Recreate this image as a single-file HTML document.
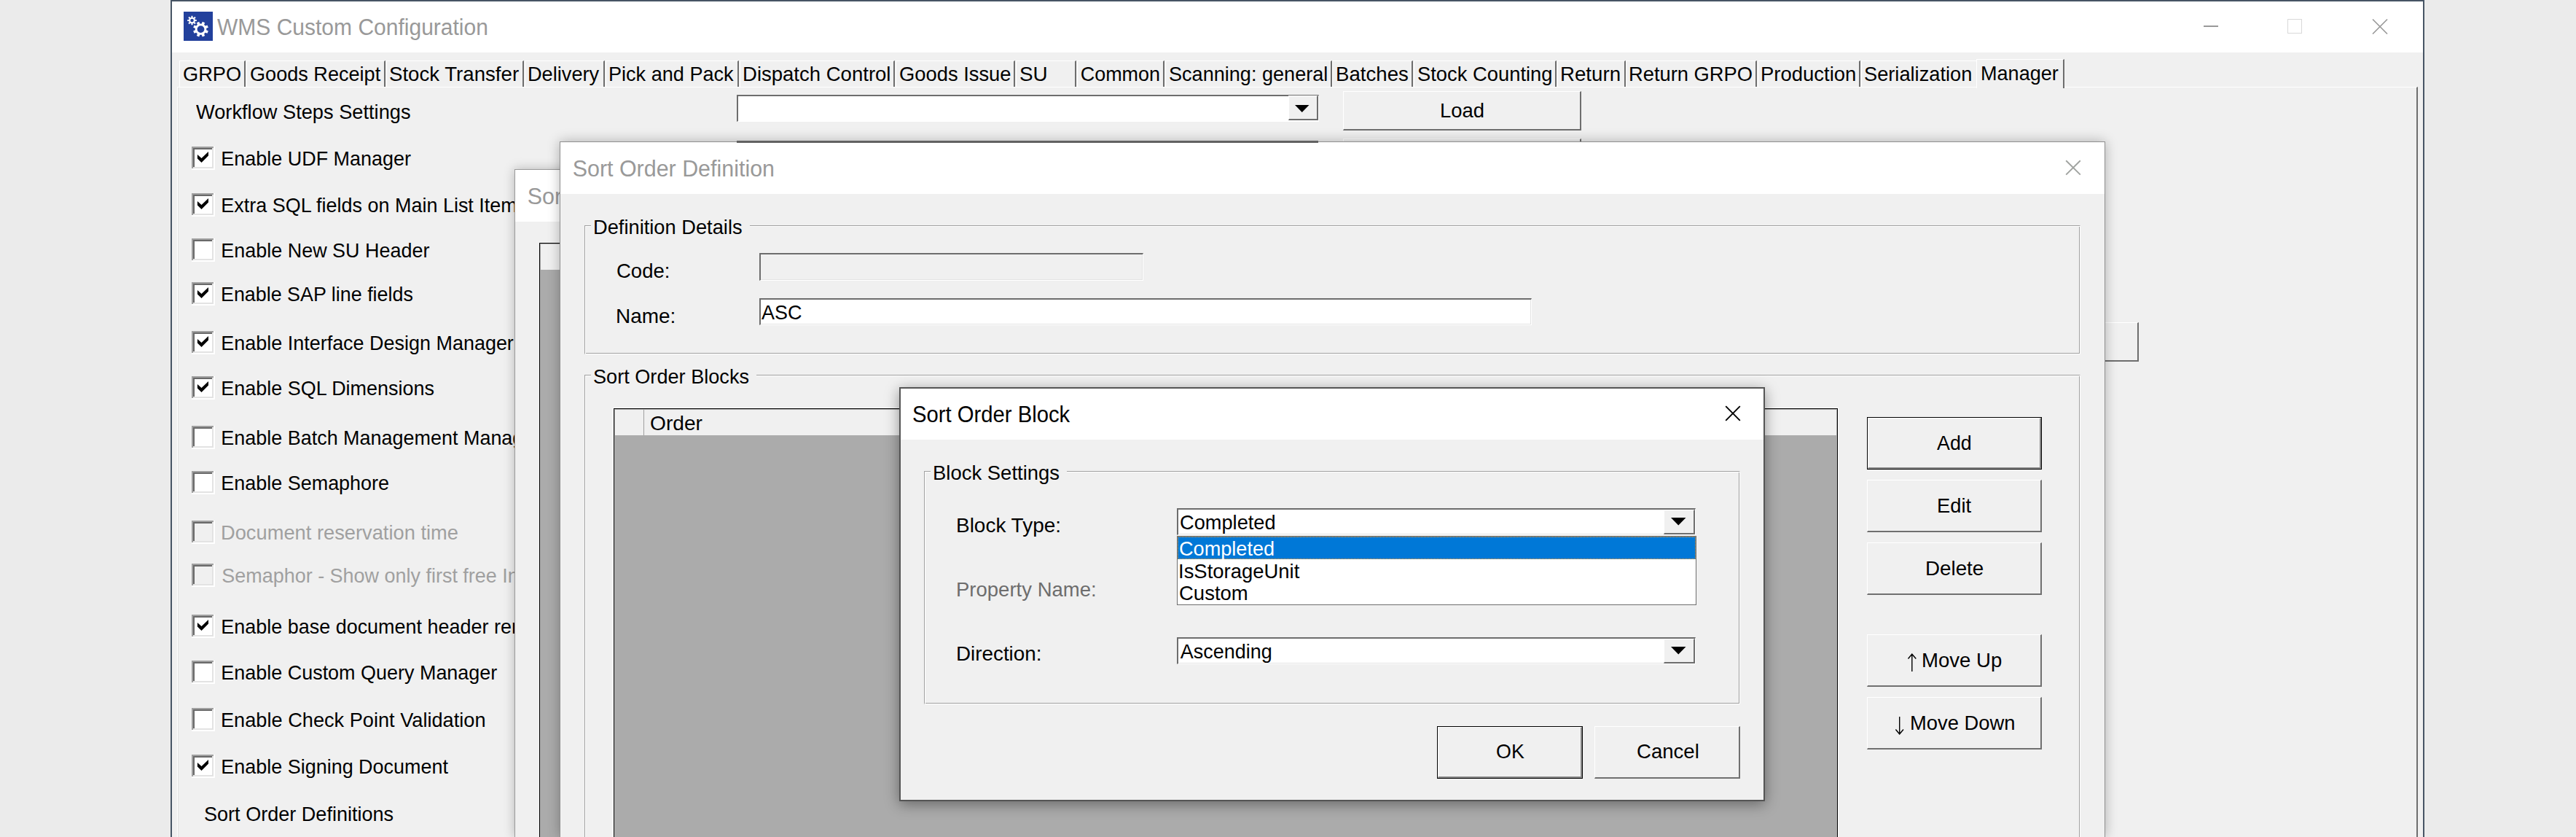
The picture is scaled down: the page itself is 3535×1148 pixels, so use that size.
<!DOCTYPE html>
<html><head><meta charset="utf-8"><style>
html,body{margin:0;padding:0;}
body{width:3535px;height:1148px;overflow:hidden;position:relative;background:#ebebeb;font-family:"Liberation Sans",sans-serif;}
div{position:absolute;}
.t{white-space:nowrap;transform-origin:0 0;}
</style></head><body>
<div class="" style="left:234px;top:0px;width:3093px;height:1148px;background:#f0f0f0;border:2px solid #475565;border-bottom:none;box-sizing:border-box"></div>
<div class="" style="left:236px;top:2px;width:3089px;height:70px;background:#fff"></div>
<svg style="position:absolute;left:252px;top:16px" width="40" height="40" viewBox="0 0 40 40"><rect width="40" height="40" fill="#22409c"/><path fill="#fff" fill-rule="evenodd" d="M24.73 16.40 L25.80 13.75 L29.19 15.15 L28.08 17.79 L29.81 19.52 L32.45 18.41 L33.85 21.80 L31.20 22.87 L31.20 25.33 L33.85 26.40 L32.45 29.79 L29.81 28.68 L28.08 30.41 L29.19 33.05 L25.80 34.45 L24.73 31.80 L22.27 31.80 L21.20 34.45 L17.81 33.05 L18.92 30.41 L17.19 28.68 L14.55 29.79 L13.15 26.40 L15.80 25.33 L15.80 22.87 L13.15 21.80 L14.55 18.41 L17.19 19.52 L18.92 17.79 L17.81 15.15 L21.20 13.75 L22.27 16.40 Z M28.40 24.10 A4.9 4.9 0 1 0 18.60 24.10 A4.9 4.9 0 1 0 28.40 24.10 Z"/><path fill="#fff" fill-rule="evenodd" d="M10.51 7.71 L10.44 5.69 L12.56 5.69 L12.49 7.71 L13.84 8.27 L15.21 6.79 L16.71 8.29 L15.23 9.66 L15.79 11.01 L17.81 10.94 L17.81 13.06 L15.79 12.99 L15.23 14.34 L16.71 15.71 L15.21 17.21 L13.84 15.73 L12.49 16.29 L12.56 18.31 L10.44 18.31 L10.51 16.29 L9.16 15.73 L7.79 17.21 L6.29 15.71 L7.77 14.34 L7.21 12.99 L5.19 13.06 L5.19 10.94 L7.21 11.01 L7.77 9.66 L6.29 8.29 L7.79 6.79 L9.16 8.27 Z M13.80 12.00 A2.3 2.3 0 1 0 9.20 12.00 A2.3 2.3 0 1 0 13.80 12.00 Z"/></svg>
<div class="t" style="left:297.50px;top:22.13px;font-size:30.43px;line-height:30.43px;color:#999;transform:scaleX(0.9864);">WMS Custom Configuration</div>
<div class="" style="left:3024px;top:35px;width:20px;height:2px;background:#999"></div>
<div class="" style="left:3139px;top:26px;width:20px;height:20px;border:1.5px solid #d9d9d9;box-sizing:border-box"></div>
<svg style="position:absolute;left:3255px;top:26px" width="22" height="21"><path d="M1 0.5 L21 20.5 M21 0.5 L1 20.5" stroke="#999" stroke-width="1.6"/></svg>
<div class="" style="left:246px;top:83px;width:91px;height:36px;border-left:1px solid #fff;border-top:1px solid #fff;border-right:2px solid #6e6e6e;box-sizing:border-box"></div>
<div class="t" style="left:250.59px;top:88.89px;font-size:26.96px;line-height:26.96px;color:#000;transform:scaleX(1.0094);">GRPO</div>
<div class="" style="left:338px;top:83px;width:191px;height:36px;border-left:1px solid #fff;border-top:1px solid #fff;border-right:2px solid #6e6e6e;box-sizing:border-box"></div>
<div class="t" style="left:342.69px;top:88.89px;font-size:26.96px;line-height:26.96px;color:#000;transform:scaleX(1.0051);">Goods Receipt</div>
<div class="" style="left:530px;top:83px;width:189px;height:36px;border-left:1px solid #fff;border-top:1px solid #fff;border-right:2px solid #6e6e6e;box-sizing:border-box"></div>
<div class="t" style="left:534.38px;top:88.89px;font-size:26.96px;line-height:26.96px;color:#000;transform:scaleX(1.0250);">Stock Transfer</div>
<div class="" style="left:720px;top:83px;width:110px;height:36px;border-left:1px solid #fff;border-top:1px solid #fff;border-right:2px solid #6e6e6e;box-sizing:border-box"></div>
<div class="t" style="left:723.68px;top:88.89px;font-size:26.96px;line-height:26.96px;color:#000;transform:scaleX(1.0081);">Delivery</div>
<div class="" style="left:831px;top:83px;width:183px;height:36px;border-left:1px solid #fff;border-top:1px solid #fff;border-right:2px solid #6e6e6e;box-sizing:border-box"></div>
<div class="t" style="left:835.49px;top:88.89px;font-size:26.96px;line-height:26.96px;color:#000;transform:scaleX(1.0046);">Pick and Pack</div>
<div class="" style="left:1015px;top:83px;width:213px;height:36px;border-left:1px solid #fff;border-top:1px solid #fff;border-right:2px solid #6e6e6e;box-sizing:border-box"></div>
<div class="t" style="left:1018.76px;top:88.89px;font-size:26.96px;line-height:26.96px;color:#000;transform:scaleX(1.0212);">Dispatch Control</div>
<div class="" style="left:1229px;top:83px;width:164px;height:36px;border-left:1px solid #fff;border-top:1px solid #fff;border-right:2px solid #6e6e6e;box-sizing:border-box"></div>
<div class="t" style="left:1233.59px;top:88.89px;font-size:26.96px;line-height:26.96px;color:#000;transform:scaleX(1.0144);">Goods Issue</div>
<div class="" style="left:1394px;top:83px;width:83px;height:36px;border-left:1px solid #fff;border-top:1px solid #fff;border-right:2px solid #6e6e6e;box-sizing:border-box"></div>
<div class="t" style="left:1398.77px;top:88.89px;font-size:26.96px;line-height:26.96px;color:#000;transform:scaleX(1.0324);">SU</div>
<div class="" style="left:1478px;top:83px;width:120px;height:36px;border-left:1px solid #fff;border-top:1px solid #fff;border-right:2px solid #6e6e6e;box-sizing:border-box"></div>
<div class="t" style="left:1482.70px;top:88.89px;font-size:26.96px;line-height:26.96px;color:#000;">Common</div>
<div class="" style="left:1599px;top:83px;width:229px;height:36px;border-left:1px solid #fff;border-top:1px solid #fff;border-right:2px solid #6e6e6e;box-sizing:border-box"></div>
<div class="t" style="left:1603.80px;top:88.89px;font-size:26.96px;line-height:26.96px;color:#000;transform:scaleX(1.0048);">Scanning: general</div>
<div class="" style="left:1828px;top:83px;width:111px;height:36px;border-left:1px solid #fff;border-top:1px solid #fff;border-right:2px solid #6e6e6e;box-sizing:border-box"></div>
<div class="t" style="left:1832.65px;top:88.89px;font-size:26.96px;line-height:26.96px;color:#000;transform:scaleX(1.0257);">Batches</div>
<div class="" style="left:1940px;top:83px;width:196px;height:36px;border-left:1px solid #fff;border-top:1px solid #fff;border-right:2px solid #6e6e6e;box-sizing:border-box"></div>
<div class="t" style="left:1944.79px;top:88.89px;font-size:26.96px;line-height:26.96px;color:#000;transform:scaleX(1.0149);">Stock Counting</div>
<div class="" style="left:2137px;top:83px;width:94px;height:36px;border-left:1px solid #fff;border-top:1px solid #fff;border-right:2px solid #6e6e6e;box-sizing:border-box"></div>
<div class="t" style="left:2141.05px;top:88.89px;font-size:26.96px;line-height:26.96px;color:#000;transform:scaleX(1.0261);">Return</div>
<div class="" style="left:2231px;top:83px;width:180px;height:36px;border-left:1px solid #fff;border-top:1px solid #fff;border-right:2px solid #6e6e6e;box-sizing:border-box"></div>
<div class="t" style="left:2234.97px;top:88.89px;font-size:26.96px;line-height:26.96px;color:#000;transform:scaleX(1.0139);">Return GRPO</div>
<div class="" style="left:2412px;top:83px;width:141px;height:36px;border-left:1px solid #fff;border-top:1px solid #fff;border-right:2px solid #6e6e6e;box-sizing:border-box"></div>
<div class="t" style="left:2415.76px;top:88.89px;font-size:26.96px;line-height:26.96px;color:#000;transform:scaleX(1.0191);">Production</div>
<div class="" style="left:2554px;top:83px;width:159px;height:36px;border-left:1px solid #fff;border-top:1px solid #fff;box-sizing:border-box"></div>
<div class="t" style="left:2558.49px;top:88.89px;font-size:26.96px;line-height:26.96px;color:#000;transform:scaleX(1.0100);">Serialization</div>
<div class="" style="left:243px;top:119px;width:3075px;height:1029px;box-shadow:inset 1px 0 0 #fff, inset 2px 0 0 #e3e3e3;border-top:1px solid #fff;border-top:1px solid #fff;border-right:2px solid #6e6e6e;box-sizing:border-box"></div>
<div class="" style="left:2712px;top:81px;width:121px;height:40px;background:#f0f0f0;border-left:1px solid #fff;border-top:1px solid #fff;border-right:2px solid #6e6e6e;box-sizing:border-box"></div>
<div class="t" style="left:2717.69px;top:87.69px;font-size:26.96px;line-height:26.96px;color:#000;transform:scaleX(1.0044);">Manager</div>
<div class="t" style="left:268.70px;top:140.89px;font-size:26.96px;line-height:26.96px;color:#000;transform:scaleX(1.0100);">Workflow Steps Settings</div>
<svg style="position:absolute;left:263px;top:201px" width="32" height="32"><rect x="0" y="0" width="32" height="32" fill="#fff"/><rect x="0" y="0" width="30" height="30" fill="#a0a0a0"/><rect x="2" y="2" width="28" height="28" fill="#e3e3e3"/><rect x="2" y="2" width="26" height="26" fill="#696969"/><rect x="4" y="4" width="24" height="24" fill="#fff"/><path d="M7.9 10.9 L7.9 16.6 L13.5 22 L23 12.5 L23 6.9 L13.5 16 Z" fill="#000"/></svg>
<div class="t" style="left:303.30px;top:204.59px;font-size:26.96px;line-height:26.96px;color:#000;">Enable UDF Manager</div>
<svg style="position:absolute;left:263px;top:265px" width="32" height="32"><rect x="0" y="0" width="32" height="32" fill="#fff"/><rect x="0" y="0" width="30" height="30" fill="#a0a0a0"/><rect x="2" y="2" width="28" height="28" fill="#e3e3e3"/><rect x="2" y="2" width="26" height="26" fill="#696969"/><rect x="4" y="4" width="24" height="24" fill="#fff"/><path d="M7.9 10.9 L7.9 16.6 L13.5 22 L23 12.5 L23 6.9 L13.5 16 Z" fill="#000"/></svg>
<div class="t" style="left:303.30px;top:268.59px;font-size:26.96px;line-height:26.96px;color:#000;">Extra SQL fields on Main List Item</div>
<svg style="position:absolute;left:263px;top:327px" width="32" height="32"><rect x="0" y="0" width="32" height="32" fill="#fff"/><rect x="0" y="0" width="30" height="30" fill="#a0a0a0"/><rect x="2" y="2" width="28" height="28" fill="#e3e3e3"/><rect x="2" y="2" width="26" height="26" fill="#696969"/><rect x="4" y="4" width="24" height="24" fill="#fff"/></svg>
<div class="t" style="left:303.30px;top:330.59px;font-size:26.96px;line-height:26.96px;color:#000;">Enable New SU Header</div>
<svg style="position:absolute;left:263px;top:387px" width="32" height="32"><rect x="0" y="0" width="32" height="32" fill="#fff"/><rect x="0" y="0" width="30" height="30" fill="#a0a0a0"/><rect x="2" y="2" width="28" height="28" fill="#e3e3e3"/><rect x="2" y="2" width="26" height="26" fill="#696969"/><rect x="4" y="4" width="24" height="24" fill="#fff"/><path d="M7.9 10.9 L7.9 16.6 L13.5 22 L23 12.5 L23 6.9 L13.5 16 Z" fill="#000"/></svg>
<div class="t" style="left:303.31px;top:390.59px;font-size:26.96px;line-height:26.96px;color:#000;transform:scaleX(0.9967);">Enable SAP line fields</div>
<svg style="position:absolute;left:263px;top:454px" width="32" height="32"><rect x="0" y="0" width="32" height="32" fill="#fff"/><rect x="0" y="0" width="30" height="30" fill="#a0a0a0"/><rect x="2" y="2" width="28" height="28" fill="#e3e3e3"/><rect x="2" y="2" width="26" height="26" fill="#696969"/><rect x="4" y="4" width="24" height="24" fill="#fff"/><path d="M7.9 10.9 L7.9 16.6 L13.5 22 L23 12.5 L23 6.9 L13.5 16 Z" fill="#000"/></svg>
<div class="t" style="left:303.30px;top:457.59px;font-size:26.96px;line-height:26.96px;color:#000;">Enable Interface Design Manager</div>
<svg style="position:absolute;left:263px;top:516px" width="32" height="32"><rect x="0" y="0" width="32" height="32" fill="#fff"/><rect x="0" y="0" width="30" height="30" fill="#a0a0a0"/><rect x="2" y="2" width="28" height="28" fill="#e3e3e3"/><rect x="2" y="2" width="26" height="26" fill="#696969"/><rect x="4" y="4" width="24" height="24" fill="#fff"/><path d="M7.9 10.9 L7.9 16.6 L13.5 22 L23 12.5 L23 6.9 L13.5 16 Z" fill="#000"/></svg>
<div class="t" style="left:303.30px;top:519.59px;font-size:26.96px;line-height:26.96px;color:#000;">Enable SQL Dimensions</div>
<svg style="position:absolute;left:263px;top:584px" width="32" height="32"><rect x="0" y="0" width="32" height="32" fill="#fff"/><rect x="0" y="0" width="30" height="30" fill="#a0a0a0"/><rect x="2" y="2" width="28" height="28" fill="#e3e3e3"/><rect x="2" y="2" width="26" height="26" fill="#696969"/><rect x="4" y="4" width="24" height="24" fill="#fff"/></svg>
<div class="t" style="left:303.30px;top:587.59px;font-size:26.96px;line-height:26.96px;color:#000;">Enable Batch Management Manager</div>
<svg style="position:absolute;left:263px;top:646px" width="32" height="32"><rect x="0" y="0" width="32" height="32" fill="#fff"/><rect x="0" y="0" width="30" height="30" fill="#a0a0a0"/><rect x="2" y="2" width="28" height="28" fill="#e3e3e3"/><rect x="2" y="2" width="26" height="26" fill="#696969"/><rect x="4" y="4" width="24" height="24" fill="#fff"/></svg>
<div class="t" style="left:303.30px;top:649.59px;font-size:26.96px;line-height:26.96px;color:#000;">Enable Semaphore</div>
<svg style="position:absolute;left:263px;top:714px" width="32" height="32"><rect x="0" y="0" width="32" height="32" fill="#fff"/><rect x="0" y="0" width="30" height="30" fill="#a0a0a0"/><rect x="2" y="2" width="28" height="28" fill="#e3e3e3"/><rect x="2" y="2" width="26" height="26" fill="#696969"/><rect x="4" y="4" width="24" height="24" fill="#f0f0f0"/></svg>
<div class="t" style="left:303.28px;top:717.59px;font-size:26.96px;line-height:26.96px;color:#a0a0a0;transform:scaleX(1.0119);">Document reservation time</div>
<svg style="position:absolute;left:263px;top:773px" width="32" height="32"><rect x="0" y="0" width="32" height="32" fill="#fff"/><rect x="0" y="0" width="30" height="30" fill="#a0a0a0"/><rect x="2" y="2" width="28" height="28" fill="#e3e3e3"/><rect x="2" y="2" width="26" height="26" fill="#696969"/><rect x="4" y="4" width="24" height="24" fill="#f0f0f0"/></svg>
<div class="t" style="left:304.30px;top:776.59px;font-size:26.96px;line-height:26.96px;color:#a0a0a0;">Semaphor - Show only first free Inventory</div>
<svg style="position:absolute;left:263px;top:843px" width="32" height="32"><rect x="0" y="0" width="32" height="32" fill="#fff"/><rect x="0" y="0" width="30" height="30" fill="#a0a0a0"/><rect x="2" y="2" width="28" height="28" fill="#e3e3e3"/><rect x="2" y="2" width="26" height="26" fill="#696969"/><rect x="4" y="4" width="24" height="24" fill="#fff"/><path d="M7.9 10.9 L7.9 16.6 L13.5 22 L23 12.5 L23 6.9 L13.5 16 Z" fill="#000"/></svg>
<div class="t" style="left:303.30px;top:846.59px;font-size:26.96px;line-height:26.96px;color:#000;">Enable base document header remarks</div>
<svg style="position:absolute;left:263px;top:906px" width="32" height="32"><rect x="0" y="0" width="32" height="32" fill="#fff"/><rect x="0" y="0" width="30" height="30" fill="#a0a0a0"/><rect x="2" y="2" width="28" height="28" fill="#e3e3e3"/><rect x="2" y="2" width="26" height="26" fill="#696969"/><rect x="4" y="4" width="24" height="24" fill="#fff"/></svg>
<div class="t" style="left:303.29px;top:909.59px;font-size:26.96px;line-height:26.96px;color:#000;">Enable Custom Query Manager</div>
<svg style="position:absolute;left:263px;top:971px" width="32" height="32"><rect x="0" y="0" width="32" height="32" fill="#fff"/><rect x="0" y="0" width="30" height="30" fill="#a0a0a0"/><rect x="2" y="2" width="28" height="28" fill="#e3e3e3"/><rect x="2" y="2" width="26" height="26" fill="#696969"/><rect x="4" y="4" width="24" height="24" fill="#fff"/></svg>
<div class="t" style="left:303.28px;top:974.59px;font-size:26.96px;line-height:26.96px;color:#000;transform:scaleX(1.0081);">Enable Check Point Validation</div>
<svg style="position:absolute;left:263px;top:1035px" width="32" height="32"><rect x="0" y="0" width="32" height="32" fill="#fff"/><rect x="0" y="0" width="30" height="30" fill="#a0a0a0"/><rect x="2" y="2" width="28" height="28" fill="#e3e3e3"/><rect x="2" y="2" width="26" height="26" fill="#696969"/><rect x="4" y="4" width="24" height="24" fill="#fff"/><path d="M7.9 10.9 L7.9 16.6 L13.5 22 L23 12.5 L23 6.9 L13.5 16 Z" fill="#000"/></svg>
<div class="t" style="left:303.30px;top:1038.59px;font-size:26.96px;line-height:26.96px;color:#000;">Enable Signing Document</div>
<div class="t" style="left:280.00px;top:1103.89px;font-size:26.96px;line-height:26.96px;color:#000;transform:scaleX(1.0038);">Sort Order Definitions</div>
<div class="" style="left:1011px;top:130px;width:799px;height:37px;background:#fff;border-top:2px solid #6d6d6d;border-left:2px solid #6d6d6d;border-bottom:1px solid #fff;border-right:1px solid #fff;box-sizing:border-box"></div>
<div class="" style="left:1768px;top:131px;width:41px;height:34px;background:#f0f0f0;border-top:1px solid #fff;border-left:1px solid #fff;border-right:2px solid #6e6e6e;border-bottom:2px solid #6e6e6e;box-sizing:border-box"></div>
<svg style="position:absolute;left:1777px;top:144px" width="20" height="10"><path d="M0 0 L19.5 0 L9.75 10 Z" fill="#000"/></svg>
<div class="" style="left:1843px;top:125px;width:327px;height:54px;background:#f0f0f0;border-top:1px solid #fff;border-left:1px solid #fff;border-right:2px solid #6e6e6e;border-bottom:2px solid #6e6e6e;box-sizing:border-box"></div>
<div class="t" style="left:1975.96px;top:139.39px;font-size:26.96px;line-height:26.96px;color:#000;transform:scaleX(1.0185);">Load</div>
<div class="" style="left:1011px;top:193px;width:798px;height:3px;border-top:2px solid #6d6d6d;box-sizing:border-box"></div>
<div class="" style="left:1843px;top:190px;width:327px;height:10px;border-top:1px solid #fff;border-left:1px solid #fff;border-right:2px solid #6e6e6e;box-sizing:border-box"></div>
<div class="" style="left:2860px;top:442px;width:75px;height:54px;border-top:1px solid #fff;border-right:2px solid #6e6e6e;border-bottom:2px solid #6e6e6e;box-sizing:border-box"></div>
<div class="" style="left:706px;top:232px;width:294px;height:916px;background:#f0f0f0;border:1px solid #9a9a9a;border-bottom:none;box-sizing:border-box;box-shadow:0 0 14px rgba(0,0,0,0.25)"></div>
<div class="" style="left:707px;top:233px;width:293px;height:71px;background:#fff"></div>
<div class="t" style="left:723.80px;top:253.73px;font-size:30.43px;line-height:30.43px;color:#999;">Sort Order Definition</div>
<div class="" style="left:740px;top:333px;width:260px;height:815px;background:#ababab;border-left:1.5px solid #000;border-top:1.5px solid #000;box-sizing:border-box"></div>
<div class="" style="left:742px;top:335px;width:258px;height:35px;background:#f0f0f0"></div>
<div class="" style="left:768px;top:194px;width:2121px;height:954px;background:#f0f0f0;border:1px solid #8f8f8f;border-bottom:none;box-sizing:border-box;box-shadow:0 0 16px rgba(0,0,0,0.28)"></div>
<div class="" style="left:769px;top:195px;width:2119px;height:71px;background:#fff"></div>
<div class="" style="left:1011px;top:194px;width:798px;height:2px;background:#646464"></div>
<div class="t" style="left:785.70px;top:215.73px;font-size:30.43px;line-height:30.43px;color:#999;">Sort Order Definition</div>
<svg style="position:absolute;left:2834px;top:219px" width="22" height="22"><path d="M1.2 1.2 L20.8 20.6 M20.8 1.2 L1.2 20.6" stroke="#a0a3a0" stroke-width="1.9"/></svg>
<div class="" style="left:802px;top:309px;width:2053px;height:177px;border-top:1px solid #a0a0a0;border-left:1px solid #a0a0a0;border-right:1px solid #fff;border-bottom:1px solid #fff;box-sizing:border-box;box-shadow:inset 1px 1px 0 #fff, inset -1px -1px 0 #a0a0a0"></div>
<div class="" style="left:811px;top:300px;width:218px;height:25px;background:#f0f0f0"></div>
<div class="t" style="left:813.98px;top:298.89px;font-size:26.96px;line-height:26.96px;color:#000;transform:scaleX(1.0117);">Definition Details</div>
<div class="t" style="left:846.48px;top:358.59px;font-size:26.96px;line-height:26.96px;color:#000;transform:scaleX(1.0202);">Code:</div>
<div class="" style="left:1042px;top:347px;width:527px;height:38px;background:#f0f0f0;border-top:2px solid #6d6d6d;border-left:2px solid #6d6d6d;border-bottom:1px solid #fff;border-right:1px solid #fff;box-sizing:border-box;box-shadow:inset -1px -1px 0 #e3e3e3"></div>
<div class="t" style="left:845.42px;top:421.29px;font-size:26.96px;line-height:26.96px;color:#000;transform:scaleX(1.0375);">Name:</div>
<div class="" style="left:1042px;top:409px;width:1060px;height:37px;background:#fff;border-top:2px solid #6d6d6d;border-left:2px solid #6d6d6d;border-bottom:1px solid #fff;border-right:1px solid #fff;box-sizing:border-box;box-shadow:inset -1px -1px 0 #e3e3e3"></div>
<div class="t" style="left:1045.00px;top:415.59px;font-size:26.96px;line-height:26.96px;color:#000;">ASC</div>
<div class="" style="left:802px;top:514px;width:2053px;height:646px;border-top:1px solid #a0a0a0;border-left:1px solid #a0a0a0;border-right:1px solid #fff;box-sizing:border-box;box-shadow:inset 1px 1px 0 #fff, inset -1px 0 0 #a0a0a0"></div>
<div class="" style="left:811px;top:505px;width:227px;height:25px;background:#f0f0f0"></div>
<div class="t" style="left:814.49px;top:503.69px;font-size:26.96px;line-height:26.96px;color:#000;transform:scaleX(1.0062);">Sort Order Blocks</div>
<div class="" style="left:842px;top:560px;width:1680px;height:588px;background:#ababab;border:1.6px solid #000;border-bottom:none;box-sizing:border-box;box-shadow:0 0 0 1px #fff"></div>
<div class="" style="left:844px;top:562px;width:1676px;height:35px;background:#f0f0f0"></div>
<div class="" style="left:883px;top:562px;width:1px;height:35px;background:#a0a0a0"></div>
<div class="t" style="left:892.36px;top:567.59px;font-size:26.96px;line-height:26.96px;color:#000;transform:scaleX(1.0444);">Order</div>
<div class="" style="left:2562px;top:572px;width:240px;height:72px;background:#f0f0f0;border:1.5px solid #000;box-sizing:border-box"><div style="position:absolute;left:0;top:0;right:0;bottom:0;border-top:1px solid #fff;border-left:1px solid #fff;border-right:2px solid #888;border-bottom:2px solid #888"></div></div>
<div class="t" style="left:2658.00px;top:594.89px;font-size:26.96px;line-height:26.96px;color:#000;transform:scaleX(0.9947);">Add</div>
<div class="" style="left:2562px;top:658px;width:240px;height:72px;background:#f0f0f0;border-top:1px solid #fff;border-left:1px solid #fff;border-right:2px solid #707070;border-bottom:2px solid #707070;box-sizing:border-box"></div>
<div class="t" style="left:2657.87px;top:680.89px;font-size:26.96px;line-height:26.96px;color:#000;transform:scaleX(1.0126);">Edit</div>
<div class="" style="left:2562px;top:744px;width:240px;height:72px;background:#f0f0f0;border-top:1px solid #fff;border-left:1px solid #fff;border-right:2px solid #707070;border-bottom:2px solid #707070;box-sizing:border-box"></div>
<div class="t" style="left:2642.34px;top:766.99px;font-size:26.96px;line-height:26.96px;color:#000;transform:scaleX(1.0296);">Delete</div>
<div class="" style="left:2562px;top:870px;width:240px;height:72px;background:#f0f0f0;border-top:1px solid #fff;border-left:1px solid #fff;border-right:2px solid #707070;border-bottom:2px solid #707070;box-sizing:border-box"></div>
<div class="t" style="left:2637.35px;top:893.29px;font-size:26.96px;line-height:26.96px;color:#000;transform:scaleX(1.0228);">Move Up</div>
<svg style="position:absolute;left:2610px;top:890px" width="30" height="40"><path d="M13.8 7.5 L13.8 31 M8.5 13.5 L13.8 7.2 L19.3 13.5" fill="none" stroke="#000" stroke-width="1.4"/></svg>
<div class="" style="left:2562px;top:956px;width:240px;height:72px;background:#f0f0f0;border-top:1px solid #fff;border-left:1px solid #fff;border-right:2px solid #707070;border-bottom:2px solid #707070;box-sizing:border-box"></div>
<div class="t" style="left:2620.57px;top:978.89px;font-size:26.96px;line-height:26.96px;color:#000;transform:scaleX(1.0155);">Move Down</div>
<svg style="position:absolute;left:2593px;top:976px" width="30" height="40"><path d="M13.7 7 L13.7 30.8 M8.4 24.5 L13.7 30.8 L19 24.5" fill="none" stroke="#000" stroke-width="1.4"/></svg>
<div class="" style="left:1234px;top:531px;width:1188px;height:568px;background:#f0f0f0;border:2px solid #555;box-sizing:border-box;box-shadow:0 4px 18px rgba(0,0,0,0.4)"></div>
<div class="" style="left:1236px;top:533px;width:1184px;height:70px;background:#fff"></div>
<div class="t" style="left:1252.04px;top:552.53px;font-size:30.43px;line-height:30.43px;color:#000;transform:scaleX(0.9615);">Sort Order Block</div>
<svg style="position:absolute;left:2367px;top:556px" width="22" height="22"><path d="M1.2 1.2 L20.8 20.8 M20.8 1.2 L1.2 20.8" stroke="#000" stroke-width="1.9"/></svg>
<div class="" style="left:1268px;top:646px;width:1120px;height:320px;border-top:1px solid #a0a0a0;border-left:1px solid #a0a0a0;border-right:1px solid #fff;border-bottom:1px solid #fff;box-sizing:border-box;box-shadow:inset 1px 1px 0 #fff, inset -1px -1px 0 #a0a0a0"></div>
<div class="" style="left:1277px;top:636px;width:187px;height:26px;background:#f0f0f0"></div>
<div class="t" style="left:1279.56px;top:635.89px;font-size:26.96px;line-height:26.96px;color:#000;transform:scaleX(1.0189);">Block Settings</div>
<div class="t" style="left:1311.93px;top:707.59px;font-size:26.96px;line-height:26.96px;color:#000;transform:scaleX(1.0372);">Block Type:</div>
<div class="t" style="left:1311.96px;top:796.39px;font-size:26.96px;line-height:26.96px;color:#6d6d6d;transform:scaleX(1.0208);">Property Name:</div>
<div class="t" style="left:1311.94px;top:884.19px;font-size:26.96px;line-height:26.96px;color:#000;transform:scaleX(1.0318);">Direction:</div>
<div class="" style="left:1615px;top:697px;width:712px;height:37px;background:#fff;border-top:2px solid #6d6d6d;border-left:2px solid #6d6d6d;border-bottom:1px solid #fff;border-right:1px solid #fff;box-sizing:border-box;box-shadow:inset -1px -1px 0 #e3e3e3"></div>
<div class="" style="left:2283px;top:699px;width:43px;height:34px;background:#f0f0f0;border-top:1px solid #fff;border-left:1px solid #fff;border-right:2px solid #6e6e6e;border-bottom:2px solid #6e6e6e;box-sizing:border-box"></div>
<svg style="position:absolute;left:2293px;top:710px" width="21" height="11"><path d="M0 0 L20.5 0 L10.25 10.5 Z" fill="#000"/></svg>
<div class="t" style="left:1618.79px;top:703.89px;font-size:26.96px;line-height:26.96px;color:#000;transform:scaleX(1.0095);">Completed</div>
<div class="" style="left:1615px;top:874px;width:712px;height:37px;background:#fff;border-top:2px solid #6d6d6d;border-left:2px solid #6d6d6d;border-bottom:1px solid #fff;border-right:1px solid #fff;box-sizing:border-box;box-shadow:inset -1px -1px 0 #e3e3e3"></div>
<div class="" style="left:2283px;top:876px;width:43px;height:34px;background:#f0f0f0;border-top:1px solid #fff;border-left:1px solid #fff;border-right:2px solid #6e6e6e;border-bottom:2px solid #6e6e6e;box-sizing:border-box"></div>
<svg style="position:absolute;left:2293px;top:887px" width="21" height="11"><path d="M0 0 L20.5 0 L10.25 10.5 Z" fill="#000"/></svg>
<div class="t" style="left:1619.80px;top:880.89px;font-size:26.96px;line-height:26.96px;color:#000;">Ascending</div>
<div class="" style="left:1615px;top:735px;width:713px;height:95px;background:#fff;border:1.5px solid #6d6d6d;box-sizing:border-box"></div>
<div class="" style="left:1616px;top:736px;width:711px;height:31px;background:#0078d7;outline:1px dotted #f39a2a;outline-offset:-1px"></div>
<div class="t" style="left:1617.79px;top:739.59px;font-size:26.96px;line-height:26.96px;color:#fff;transform:scaleX(1.0056);">Completed</div>
<div class="t" style="left:1616.76px;top:771.29px;font-size:26.96px;line-height:26.96px;color:#000;transform:scaleX(1.0184);">IsStorageUnit</div>
<div class="t" style="left:1617.78px;top:801.39px;font-size:26.96px;line-height:26.96px;color:#000;transform:scaleX(1.0203);">Custom</div>
<div class="" style="left:1972px;top:996px;width:200px;height:72px;background:#f0f0f0;border:1.5px solid #000;box-sizing:border-box"><div style="position:absolute;left:0;top:0;right:0;bottom:0;border-top:1px solid #fff;border-left:1px solid #fff;border-right:2px solid #888;border-bottom:2px solid #888"></div></div>
<div class="t" style="left:2053.00px;top:1018.49px;font-size:26.96px;line-height:26.96px;color:#000;transform:scaleX(0.9960);">OK</div>
<div class="" style="left:2188px;top:996px;width:200px;height:72px;background:#f0f0f0;border-top:1px solid #fff;border-left:1px solid #fff;border-right:2px solid #707070;border-bottom:2px solid #707070;box-sizing:border-box"></div>
<div class="t" style="left:2245.68px;top:1018.49px;font-size:26.96px;line-height:26.96px;color:#000;transform:scaleX(1.0224);">Cancel</div>
</body></html>
